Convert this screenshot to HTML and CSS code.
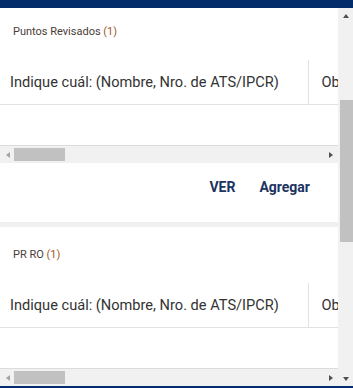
FILE: index.html
```html
<!DOCTYPE html>
<html lang="es">

<head>
  <meta charset="UTF-8">
  <meta name="viewport" content="width=device-width, initial-scale=1.0">
  <title>Puntos revisados</title>
  <link rel="stylesheet" href="styles.css">
</head>

<body>
  <div class="window">
    <div class="pane">
      <section class="card card--first">
        <h3 class="card__title">Puntos Revisados <span class="card__count">(1)</span></h3>
        <div class="grid">
          <table class="grid__table">
            <thead>
              <tr>
                <th class="grid__head grid__head--main">Indique cuál: (Nombre, Nro. de ATS/IPCR)</th>
                <th class="grid__head">Observaciones</th>
                <th class="grid__head">Responsable</th>
                <th class="grid__head">Fecha</th>
                <th class="grid__head">Estado</th>
              </tr>
            </thead>
            <tbody>
              <tr class="grid__row">
                <td></td><td></td><td></td><td></td><td></td>
              </tr>
            </tbody>
          </table>
        </div>
        <div class="hbar">
          <span class="hbar__btn"><i class="arrow arrow--left"></i></span>
          <span class="hbar__track"><span class="hbar__thumb"></span></span>
          <span class="hbar__btn"><i class="arrow arrow--right"></i></span>
        </div>
        <div class="card__actions">
          <a href="#" class="card__btn">VER</a>
          <a href="#" class="card__btn">Agregar</a>
        </div>
      </section>

      <section class="card">
        <h3 class="card__title">PR RO <span class="card__count">(1)</span></h3>
        <div class="grid">
          <table class="grid__table">
            <thead>
              <tr>
                <th class="grid__head grid__head--main">Indique cuál: (Nombre, Nro. de ATS/IPCR)</th>
                <th class="grid__head">Observaciones</th>
                <th class="grid__head">Responsable</th>
                <th class="grid__head">Fecha</th>
                <th class="grid__head">Estado</th>
              </tr>
            </thead>
            <tbody>
              <tr class="grid__row">
                <td></td><td></td><td></td><td></td><td></td>
              </tr>
            </tbody>
          </table>
        </div>
        <div class="hbar">
          <span class="hbar__btn"><i class="arrow arrow--left"></i></span>
          <span class="hbar__track"><span class="hbar__thumb"></span></span>
          <span class="hbar__btn"><i class="arrow arrow--right"></i></span>
        </div>
        <div class="card__actions">
          <a href="#" class="card__btn">VER</a>
          <a href="#" class="card__btn">Agregar</a>
        </div>
      </section>
    </div>

    <div class="vbar">
      <span class="vbar__btn"><i class="arrow arrow--up"></i></span>
      <span class="vbar__track"><span class="vbar__thumb"></span></span>
      <span class="vbar__btn"><i class="arrow arrow--down"></i></span>
    </div>
  </div>
</body>

</html>
```

FILE: styles.css
```css
* {
  margin: 0;
  padding: 0;
  box-sizing: border-box;
}

body {
  height: 100vh;
  padding: 8px 0 2px;
  background-color: #032d6a;
  font-family: Roboto, 'Noto Sans', sans-serif;
  overflow: hidden;
}

a {
  text-decoration: none;
  color: inherit;
}

.window {
  display: flex;
  height: 100%;
  background-color: #f0f0f2;
}

.pane {
  flex: 1;
  min-width: 0;
  overflow: hidden;
}

/* CARDS */
.card {
  background-color: #fff;
  margin-bottom: 5px;
  padding-top: 21px;
}

.card--first {
  margin-top: -4px;
}

.card__title {
  padding-left: 13px;
  font-size: 11px;
  font-weight: 400;
  line-height: 13px;
  color: #4b3c3a;
}

.card__count {
  color: #a2582a;
}

.grid {
  margin-top: 22px;
  overflow: hidden;
}

.grid__table {
  width: 2050px;
  border-collapse: collapse;
  table-layout: fixed;
}

.grid__head {
  height: 44px;
  padding: 0 12px 0 13px;
  font-size: 14.6px;
  font-weight: 400;
  text-align: left;
  color: #333;
  white-space: nowrap;
  border-bottom: 1px solid #e2e2e2;
  border-right: 1px solid #e2e2e2;
}

.grid__head--main {
  width: 308px;
  padding-left: 10px;
}

.grid__row td {
  height: 41px;
}

.card__actions {
  display: flex;
  justify-content: flex-end;
  gap: 24px;
  height: 59px;
  padding: 16px 28px 0 0;
}

.card__btn {
  font-size: 14px;
  font-weight: 700;
  line-height: 16px;
  color: #1b3461;
}

/* SCROLLBARS */
.hbar {
  display: flex;
  height: 18px;
  border-top: 1px solid #dcdcdc;
  background-color: #f1f1f1;
}

.hbar__btn,
.vbar__btn {
  display: flex;
  align-items: center;
  justify-content: center;
  flex: 0 0 15px;
  height: 17px;
}

.vbar__btn {
  height: 15px;
}

.hbar__track {
  flex: 1;
}

.hbar__thumb {
  display: block;
  width: 51px;
  height: 13px;
  margin: 2px 0 0 -1px;
  background-color: #c1c1c1;
}

.vbar {
  display: flex;
  flex-direction: column;
  width: 15px;
  background-color: #f1f1f1;
}

.vbar__track {
  flex: 1;
}

.vbar__thumb {
  display: block;
  width: 13px;
  height: 142px;
  margin: 77px 0 0 2px;
  background-color: #c1c1c1;
}

.arrow {
  width: 0;
  height: 0;
  border: 0 solid transparent;
}

.arrow--left {
  border-width: 3.5px 4px 3.5px 0;
  border-right-color: #a3a3a3;
}

.arrow--right {
  border-width: 3.5px 0 3.5px 4px;
  border-left-color: #505050;
}

.arrow--up {
  border-width: 0 3.5px 4px;
  border-bottom-color: #505050;
}

.arrow--down {
  border-width: 4px 3.5px 0;
  border-top-color: #505050;
}
```
